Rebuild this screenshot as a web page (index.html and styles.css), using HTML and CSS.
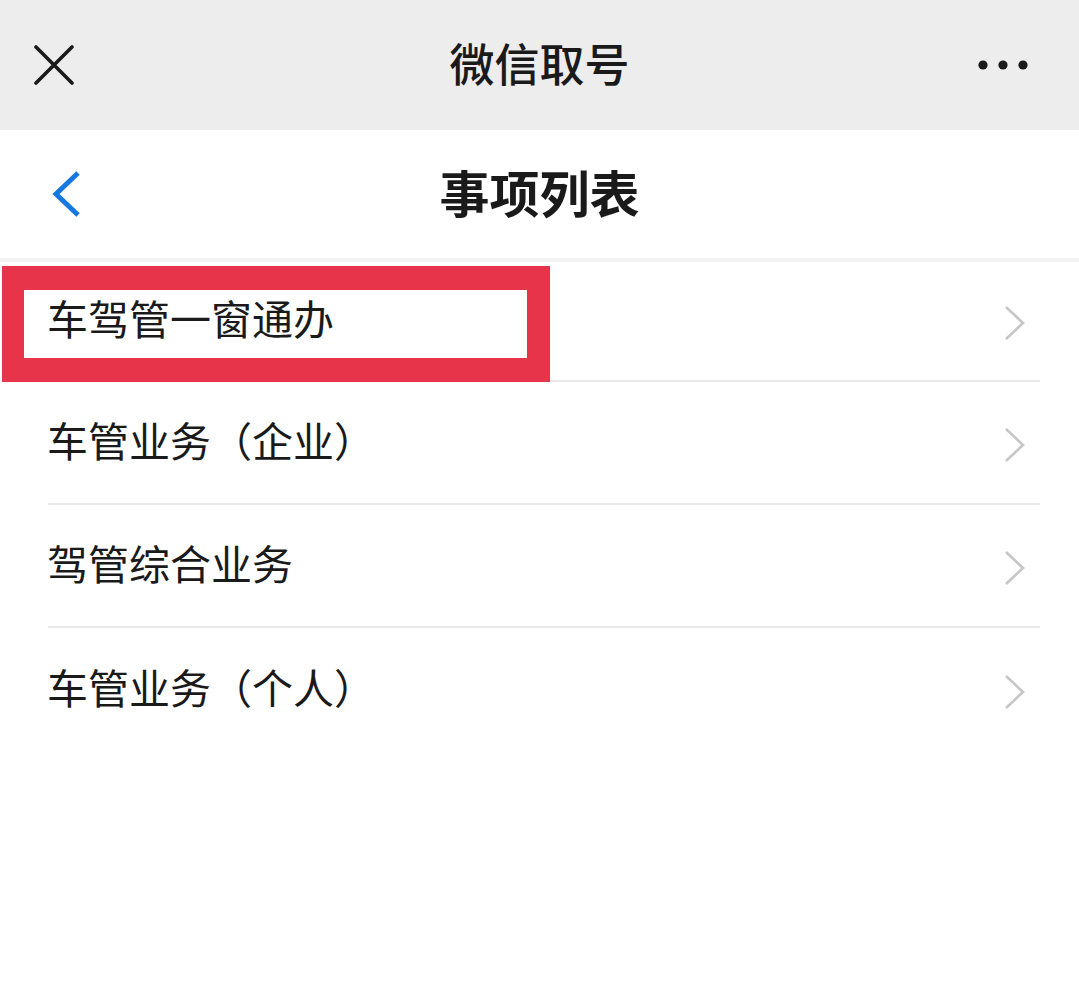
FILE: index.html
```html
<!DOCTYPE html>
<html lang="zh-CN">
<head>
<meta charset="utf-8">
<title>微信取号</title>
<link rel="stylesheet" href="styles.css">
</head>
<body>
<div class="topbar">
  <div class="tb-left">
    <svg class="close" width="40" height="40" viewBox="0 0 40 40"><path d="M2 2 L38 38 M38 2 L2 38" stroke="#1a1a1a" stroke-width="3.6" stroke-linecap="round" fill="none"/></svg>
  </div>
  <div class="tb-title">微信取号</div>
  <div class="tb-right">
    <svg width="50" height="12" viewBox="0 0 50 12"><circle cx="5" cy="6" r="4.6" fill="#1a1a1a"/><circle cx="25" cy="6" r="4.6" fill="#1a1a1a"/><circle cx="45" cy="6" r="4.6" fill="#1a1a1a"/></svg>
  </div>
</div>
<div class="header">
  <div class="hd-left">
    <svg width="30" height="46" viewBox="0 0 30 46"><path d="M26 2 L4 23 L26 44" stroke="#1677e0" stroke-width="5" stroke-linejoin="miter" fill="none"/></svg>
  </div>
  <div class="hd-title">事项列表</div>
  <div class="hd-right"></div>
</div>
<div class="list">
  <div class="row first"><span class="label">车驾管一窗通办</span><svg class="arrow" width="22" height="36" viewBox="0 0 22 36"><path d="M2 2 L19 18 L2 34" stroke="#c6c6c6" stroke-width="2.6" fill="none"/></svg></div>
  <div class="row"><span class="label">车管业务（企业）</span><svg class="arrow" width="22" height="36" viewBox="0 0 22 36"><path d="M2 2 L19 18 L2 34" stroke="#c6c6c6" stroke-width="2.6" fill="none"/></svg></div>
  <div class="row"><span class="label">驾管综合业务</span><svg class="arrow" width="22" height="36" viewBox="0 0 22 36"><path d="M2 2 L19 18 L2 34" stroke="#c6c6c6" stroke-width="2.6" fill="none"/></svg></div>
  <div class="row last"><span class="label">车管业务（个人）</span><svg class="arrow" width="22" height="36" viewBox="0 0 22 36"><path d="M2 2 L19 18 L2 34" stroke="#c6c6c6" stroke-width="2.6" fill="none"/></svg></div>
</div>
<div class="highlight"></div>
</body>
</html>
```
FILE: styles.css
```css
* { box-sizing: border-box; }
html, body { margin: 0; padding: 0; background: #ffffff; }
body {
  font-family: "Noto Sans CJK SC", "Noto Sans", sans-serif;
  color: #1a1a1a;
  width: 1079px;
  min-height: 982px;
  position: relative;
}
.topbar {
  height: 130px;
  background: #ededed;
  display: flex;
  align-items: center;
  padding: 0 34px;
}
.tb-left { width: 200px; display: flex; align-items: center; }
.tb-title {
  flex: 1;
  text-align: center;
  font-size: 45px;
  font-weight: 500;
  color: #1a1a1a;
  margin-top: -6px;
}
.tb-right { width: 200px; display: flex; justify-content: flex-end; padding-right: 17px; }
.header {
  height: 132px;
  border-bottom: 4px solid #f2f2f2;
  display: flex;
  align-items: center;
  padding-left: 52px;
}
.hd-left { width: 200px; display: flex; align-items: center; }
.hd-title {
  flex: 1;
  text-align: center;
  font-size: 50px;
  font-weight: 700;
  padding-right: 52px;
  margin-top: -6px;
}
.hd-right { width: 200px; }
.list { padding: 0 39px 0 48px; }
.row {
  height: 123px;
  display: flex;
  align-items: center;
  justify-content: space-between;
  border-bottom: 2px solid #e8e8e8;
  padding-right: 14px;
}
.row.first { height: 120px; }
.row.last { border-bottom: none; }
.label {
  font-size: 41px;
  margin-left: -1px;
  margin-top: -8px;
  color: #1a1a1a;
}
.arrow { margin-top: 4px; }
.highlight {
  position: absolute;
  left: 2px;
  top: 266px;
  width: 548px;
  height: 116px;
  border: solid #e8344a;
  border-width: 24px 23px 24px 22px;
}
```
